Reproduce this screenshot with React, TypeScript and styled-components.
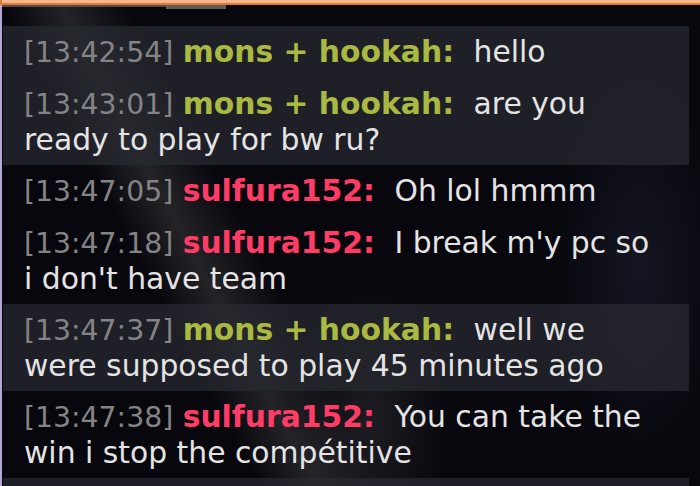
import React from 'react'
import styled, { createGlobalStyle } from 'styled-components'

interface Message {
  time: string
  user: string
  text: string
}

interface Group {
  user: 'mons' | 'sulfura'
  messages: Message[]
}

const groups: Group[] = [
  {
    user: 'mons',
    messages: [
      { time: '13:42:54', user: 'mons + hookah', text: 'hello' },
      { time: '13:43:01', user: 'mons + hookah', text: 'are you ready to play for bw ru?' },
    ],
  },
  {
    user: 'sulfura',
    messages: [
      { time: '13:47:05', user: 'sulfura152', text: 'Oh lol hmmm' },
      { time: '13:47:18', user: 'sulfura152', text: "I break m'y pc so i don't have team" },
    ],
  },
  {
    user: 'mons',
    messages: [
      { time: '13:47:37', user: 'mons + hookah', text: 'well we were supposed to play 45 minutes ago' },
    ],
  },
  {
    user: 'sulfura',
    messages: [
      { time: '13:47:38', user: 'sulfura152', text: 'You can take the win i stop the compétitive' },
    ],
  },
  {
    user: 'mons',
    messages: [],
  },
]

const userColors = {
  mons: '#aab942',
  sulfura: '#ff3c66',
}

const GlobalStyle = createGlobalStyle`
  html, body {
    margin: 0;
    padding: 0;
    background: #06060c;
    overflow: hidden;
  }
`

// blurred stream background behind the chat
const Frame = styled.div`
  width: 700px;
  height: 486px;
  display: flex;
  flex-direction: column;
  overflow: hidden;
  background:
    linear-gradient(62deg, rgba(0,0,0,0) 27%, rgba(58,58,62,0.55) 33%, rgba(0,0,0,0) 40%),
    radial-gradient(ellipse 80px 140px at 370px 420px, rgba(50,50,56,0.5), rgba(0,0,0,0)),
    radial-gradient(ellipse 90px 200px at 640px 270px, rgba(34,36,54,0.5), rgba(0,0,0,0)),
    #07070d;
  font-family: 'DejaVu Sans', Verdana, sans-serif;
`

const TopEdge = styled.div`
  flex-shrink: 0;
  height: 3px;
  background: #f4b68b;
  border-bottom: 2px solid #e8782f;
  border-left: 2px solid #e8782f;
`

const TabStrip = styled.div`
  flex-shrink: 0;
  display: flex;
  align-items: flex-start;
  height: 21px;
  border-left: 2px solid #b6a8d4;
`

const TabLine = styled.div<{ $width: number; $active?: boolean }>`
  width: ${({ $width }) => $width}px;
  height: ${({ $active }) => ($active ? 4 : 2)}px;
  background: ${({ $active }) => ($active ? '#5c5c5e' : '#4e4e50')};
`

const ChatList = styled.div`
  flex: 1;
  min-height: 0;
  display: flex;
  flex-direction: column;
  border-left: 2px solid #b6a8d4;
  padding-right: 11px;
`

const GroupBlock = styled.div<{ $light: boolean }>`
  background: ${({ $light }) => ($light ? 'rgba(42, 42, 50, 0.72)' : 'transparent')};
  margin-left: 1px;
  flex-shrink: 0;
`

const Row = styled.div`
  padding: 8px 34px 8px 21px;
  font-size: 29.8px;
  line-height: 35px;
  color: #e4e4e4;
  -webkit-font-smoothing: antialiased;
`

const Time = styled.span`
  color: #848486;
  font-size: 28.3px;
`

const Name = styled.span<{ $color: string }>`
  color: ${({ $color }) => $color};
  font-weight: bold;
  margin-right: 10px;
`

const Text = styled.span``

const Spacer = styled.div`
  height: 20px;
`

export default function App() {
  return (
    <>
      <GlobalStyle />
      <Frame>
        <TopEdge />
        <TabStrip>
          <TabLine $width={164} />
          <TabLine $width={60} $active />
        </TabStrip>
        <ChatList>
          {groups.map((g, i) => (
            <GroupBlock key={i} $light={g.user === 'mons'}>
              {g.messages.map(m => (
                <Row key={m.time}>
                  <Time>[{m.time}]</Time>{' '}
                  <Name $color={userColors[g.user]}>{m.user}:</Name>{' '}
                  <Text>{m.text}</Text>
                </Row>
              ))}
              {g.messages.length === 0 && <Spacer />}
            </GroupBlock>
          ))}
        </ChatList>
      </Frame>
    </>
  )
}
